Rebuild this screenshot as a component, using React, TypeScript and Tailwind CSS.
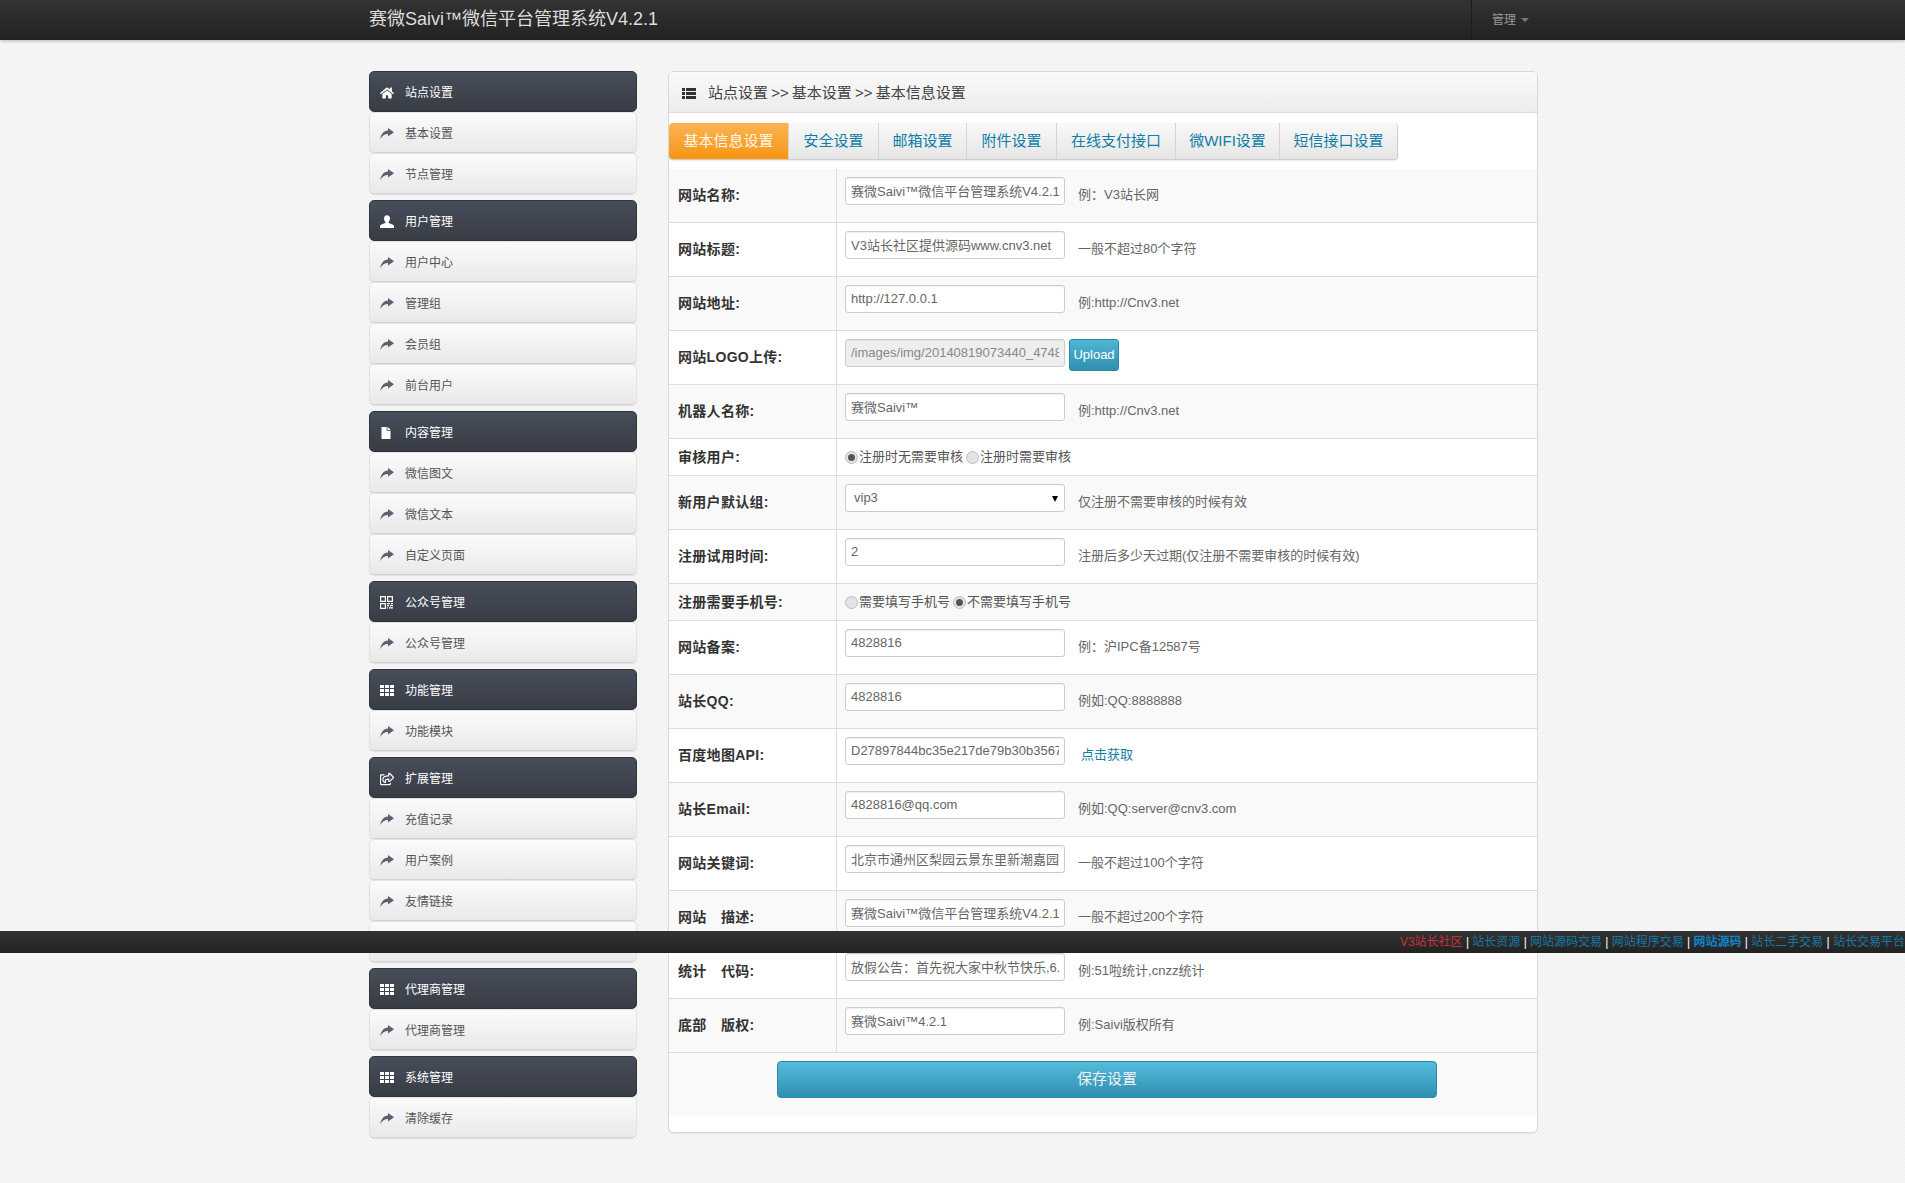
import { FaFile, FaHome, FaRegShareSquare } from "react-icons/fa";
import type { ReactNode } from "react";

const ShareAlt = () => (
  <svg width="14" height="13" viewBox="0 0 14 13" fill="currentColor">
    <path d="M8 1 L14 5.200 L8 9.600 V7 C4.600 7 2.200 8.400 .4 12 C.7 7.400 3.600 3.600 8 3.400 Z" />
  </svg>
);

const Th = () => (
  <svg width="14" height="11" viewBox="0 0 14 11" fill="currentColor">
    <path d="M0 0h4v3H0zM5 0h4v3H5zM10 0h4v3h-4zM0 4h4v3H0zM5 4h4v3H5zM10 4h4v3h-4zM0 8h4v3H0zM5 8h4v3H5zM10 8h4v3h-4z" />
  </svg>
);

const ThList = () => (
  <svg width="14" height="11" viewBox="0 0 14 11" fill="currentColor">
    <path d="M0 0h3v3H0zM4 0h10v3H4zM0 4h3v3H0zM4 4h10v3H4zM0 8h3v3H0zM4 8h10v3H4z" />
  </svg>
);

const Qr = () => (
  <svg width="13" height="13" viewBox="0 0 13 13" fill="none" stroke="currentColor" strokeWidth="1.200">
    <path d="M.6.6h4.800v4.800H.6zM7.600.6h4.800v4.800H7.600zM.6 7.600h4.800v4.800H.6z" />
    <path d="M7 7.600h3M11 7.600h2M7 9.600h2M10 9.600h3M7 11.800h1M9 11.800h4" />
  </svg>
);

const UserIcon = () => (
  <svg width="14" height="13" viewBox="0 0 14 13" fill="currentColor">
    <path d="M7 .3c-2 0-3 1.400-3 3.300 0 1.500.6 2.700 1.400 3.400v1.100C3.400 8.800.8 9.500 0 10.800V13h14v-2.200c-.8-1.300-3.400-2-5.400-2.700V7c.8-.7 1.400-1.900 1.400-3.400 0-1.900-1-3.300-3-3.300z" />
  </svg>
);

const menu = [
  { title: "站点设置", icon: <FaHome size={14} />, items: ["基本设置", "节点管理"] },
  { title: "用户管理", icon: <UserIcon />, items: ["用户中心", "管理组", "会员组", "前台用户"] },
  { title: "内容管理", icon: <FaFile size={12} />, items: ["微信图文", "微信文本", "自定义页面"] },
  { title: "公众号管理", icon: <Qr />, items: ["公众号管理"] },
  { title: "功能管理", icon: <Th />, items: ["功能模块"] },
  { title: "扩展管理", icon: <FaRegShareSquare size={14} />, items: ["充值记录", "用户案例", "友情链接", "在线客服"] },
  { title: "代理商管理", icon: <Th />, items: ["代理商管理"] },
  { title: "系统管理", icon: <Th />, items: ["清除缓存"] },
];

const tabs = [
  { label: "基本信息设置", width: "w-[119px]" },
  { label: "安全设置", width: "w-[90px]" },
  { label: "邮箱设置", width: "w-[88px]" },
  { label: "附件设置", width: "w-[90px]" },
  { label: "在线支付接口", width: "w-[119px]" },
  { label: "微WIFI设置", width: "w-[104px]" },
  { label: "短信接口设置", width: "w-[118px]" },
];

const fields = [
  { label: "网站名称:", value: "赛微Saivi™微信平台管理系统V4.2.1", hint: "例：V3站长网" },
  { label: "网站标题:", value: "V3站长社区提供源码www.cnv3.net", hint: "一般不超过80个字符" },
  { label: "网站地址:", value: "http://127.0.0.1", hint: "例:http://Cnv3.net" },
];

const fieldsLower = [
  { label: "网站备案:", value: "4828816", hint: "例：沪IPC备12587号" },
  { label: "站长QQ:", value: "4828816", hint: "例如:QQ:8888888" },
  { label: "百度地图API:", value: "D27897844bc35e217de79b30b356738a", link: "点击获取" },
  { label: "站长Email:", value: "4828816@qq.com", hint: "例如:QQ:server@cnv3.com" },
  { label: "网站关键词:", value: "北京市通州区梨园云景东里新潮嘉园小区", hint: "一般不超过100个字符" },
  { label: "网站\u3000描述:", value: "赛微Saivi™微信平台管理系统V4.2.1", hint: "一般不超过200个字符" },
  { label: "统计\u3000代码:", value: "放假公告：首先祝大家中秋节快乐,6.", hint: "例:51啦统计,cnzz统计" },
  { label: "底部\u3000版权:", value: "赛微Saivi™4.2.1", hint: "例:Saivi版权所有" },
];

const links = ["站长资源", "网站源码交易", "网站程序交易", "网站源码", "站长二手交易", "站长交易平台"];

const Row = ({ label, striped, short, children }: { label: string; striped: boolean; short?: boolean; children: ReactNode }) => (
  <div className={`flex border-b border-[#ddd] ${short ? "h-[37px]" : "h-[54px]"} ${striped ? "bg-[#f9f9f9]" : "bg-white"}`}>
    <div className="w-[168px] shrink-0 flex items-center pl-[9px] border-r border-[#ddd] text-[14px] font-bold tracking-[0.3px] text-[#333]">
      {label}
    </div>
    <div className={`flex-1 flex pl-2 ${short ? "items-center" : "items-start pt-2"}`}>{children}</div>
  </div>
);

const Field = ({ value, disabled }: { value: string; disabled?: boolean }) => (
  <input
    readOnly
    value={value}
    className={`w-[220px] h-[28px] shrink-0 px-[5px] pb-[2px] text-[13px] rounded-[3px] border border-[#ccc] outline-none shadow-[inset_0_1px_1px_rgba(0,0,0,0.06)] ${
      disabled ? "bg-[#eee] text-[#888]" : "bg-white text-[#666]"
    }`}
  />
);

const Hint = ({ children }: { children: ReactNode }) => (
  <span className="ml-[13px] text-[13px] leading-9 text-[#666]">{children}</span>
);

const Radio = ({ checked, label }: { checked?: boolean; label: string }) => (
  <label className="flex items-center text-[13px] text-[#555]">
    <span className="w-[13px] h-[13px] rounded-full border border-[#bbb] bg-[#e4e4e4] flex items-center justify-center">
      {checked && <span className="w-[7px] h-[7px] rounded-full bg-[#555]" />}
    </span>
    <span className="ml-[1px]">{label}</span>
  </label>
);

export default function App() {
  return (
    <div className="relative w-full h-[1183px] overflow-hidden bg-[repeating-conic-gradient(#f2f2f2_0_25%,#f6f6f6_0_50%)] bg-[length:4px_4px] font-['Liberation_Sans','Noto_Sans_CJK_SC',sans-serif]">
      {/* top navbar */}
      <header className="h-10 bg-gradient-to-b from-[#333] to-[#222] shadow-[0_1px_3px_rgba(0,0,0,0.25)]">
        <div className="ml-[369px] w-[1169px] h-full flex items-center justify-between">
          <span className="text-[18px] text-[#ddd] -mt-[2px]">赛微Saivi™微信平台管理系统V4.2.1</span>
          <div className="h-full w-[67px] flex items-center pl-5 border-l border-[#1d1d1d] text-[12px] text-[#999]">
            <span className="shrink-0">管理</span>
            <span className="ml-[5px] w-0 h-0 shrink-0 border-x-4 border-t-4 border-x-transparent border-t-[#777]" />
          </div>
        </div>
      </header>

      <div className="ml-[369px] w-[1169px] pt-[31px] flex justify-between items-start">
        {/* side menu */}
        <aside className="w-[268px] flex flex-col gap-[6px]">
          {menu.map((group) => (
            <div key={group.title}>
              <div className="h-[41px] pt-[2px] flex items-center rounded-[5px] bg-gradient-to-b from-[#474e5a] to-[#383c45] border border-[#30343b] text-white text-[12px]">
                <span className="w-[35px] pl-[10px] flex justify-start shrink-0">{group.icon}</span>
                {group.title}
              </div>
              {group.items.map((item) => (
                <div
                  key={item}
                  className="h-[41px] pt-[2px] flex items-center rounded-[5px] bg-gradient-to-b from-[#fbfbfb] to-[#e9e9e9] border border-[#e2e2e2] border-b-[#d2d2d2] shadow-[0_1px_1px_rgba(0,0,0,0.08)] text-[#555] text-[12px]"
                >
                  <span className="w-[35px] pl-[10px] shrink-0 text-[#59626e]">
                    <ShareAlt />
                  </span>
                  {item}
                </div>
              ))}
            </div>
          ))}
        </aside>

        {/* main panel */}
        <main className="w-[870px] h-[1062px] bg-white border border-[#d8d8d8] rounded-[5px] shadow-[0_1px_1px_rgba(0,0,0,0.05)] overflow-hidden">
          <div className="h-[41px] pt-[2px] flex items-center pl-[13px] bg-gradient-to-b from-[#fafafa] to-[#ececec] border-b border-[#ddd] text-[15px] text-[#444] [word-spacing:-1px]">
            <span className="mr-[12px] text-[#333]">
              <ThList />
            </span>
            站点设置 &gt;&gt; 基本设置 &gt;&gt; 基本信息设置
          </div>

          <div className="mt-[10px] mb-[9px] flex h-[37px] w-fit rounded-[4px] border-b border-r border-[#ccc] bg-gradient-to-b from-[#f8f8f8] to-[#e6e6e6] shadow-[0_1px_1px_rgba(0,0,0,0.08)]">
            {tabs.map((tab, i) => (
              <div
                key={tab.label}
                className={`${tab.width} flex items-center justify-center text-[15px] ${
                  i === 0
                    ? "rounded-l-[4px] bg-gradient-to-b from-[#fbb450] to-[#f89406] text-[#fff7e6]"
                    : "text-[#0f7ea6] border-l border-[#d4d4d4] first:border-l-0"
                }`}
              >
                {tab.label}
              </div>
            ))}
          </div>

          {fields.map((f, i) => (
            <Row key={f.label} label={f.label} striped={i % 2 === 0}>
              <Field value={f.value} />
              <Hint>{f.hint}</Hint>
            </Row>
          ))}

          <Row label="网站LOGO上传:" striped={false}>
            <Field value="/images/img/20140819073440_47488.png" disabled />
            <button className="ml-1 w-[50px] h-8 rounded-[3px] bg-gradient-to-b from-[#4fb6d6] to-[#2f8fb0] border border-[#2f88a8] text-white text-[13px]">
              Upload
            </button>
          </Row>

          <Row label="机器人名称:" striped>
            <Field value="赛微Saivi™" />
            <Hint>例:http://Cnv3.net</Hint>
          </Row>

          <Row label="审核用户:" striped={false} short>
            <Radio checked label="注册时无需要审核" />
            <span className="w-[3px]" />
            <Radio label="注册时需要审核" />
          </Row>

          <Row label="新用户默认组:" striped>
            <div className="relative w-[220px] h-[28px] shrink-0 flex items-center pl-2 bg-white border border-[#ccc] rounded-[3px] text-[13px] text-[#666]">
              vip3
              <span className="absolute right-[6px] top-[11px] w-0 h-0 border-x-[3px] border-t-[6px] border-x-transparent border-t-black" />
            </div>
            <Hint>仅注册不需要审核的时候有效</Hint>
          </Row>

          <Row label="注册试用时间:" striped={false}>
            <Field value="2" />
            <Hint>注册后多少天过期(仅注册不需要审核的时候有效)</Hint>
          </Row>

          <Row label="注册需要手机号:" striped short>
            <Radio label="需要填写手机号" />
            <span className="w-[3px]" />
            <Radio checked label="不需要填写手机号" />
          </Row>

          {fieldsLower.map((f, i) => (
            <Row key={f.label} label={f.label} striped={i % 2 === 1}>
              <Field value={f.value} />
              {f.link ? (
                <span className="ml-4 text-[13px] leading-9 text-[#0f7ea6]">{f.link}</span>
              ) : (
                <Hint>{f.hint}</Hint>
              )}
            </Row>
          ))}

          <div className="h-[62px] pt-2 pl-[108px] bg-[#f9f9f9]">
            <button className="w-[660px] h-[37px] rounded-[4px] bg-gradient-to-b from-[#54bcdb] to-[#2f8fb0] border border-[#2f88a8] text-[15px] text-[#f2f2f2]">
              保存设置
            </button>
          </div>
        </main>
      </div>

      {/* scrolling link bar */}
      <div className="fixed left-0 right-0 top-[931px] h-[22px] flex items-center justify-end overflow-hidden whitespace-nowrap bg-gradient-to-b from-[#333] to-[#222] text-[12px]">
        <span className="text-[#c9313d]">V3站长社区</span>
        {links.map((link, i) => (
          <span key={i} className="flex items-center">
            <span className="mx-[3.3px] text-white">|</span>
            <span className={i === 3 ? "font-bold text-[#0c86c9]" : "text-[#1679a5]"}>{link}</span>
          </span>
        ))}
      </div>
    </div>
  );
}
